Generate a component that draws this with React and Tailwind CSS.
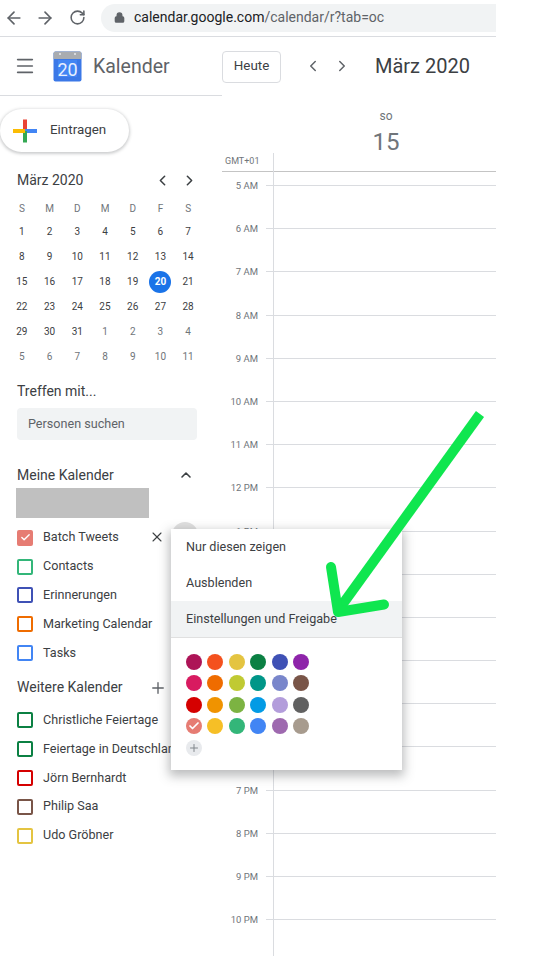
import React from "react";
import { ChevronLeft, ChevronRight, ChevronUp, X, Plus, ArrowLeft, ArrowRight, RotateCw, Lock, Menu, Check } from "lucide-react";

const weeks = [
  [1, 2, 3, 4, 5, 6, 7],
  [8, 9, 10, 11, 12, 13, 14],
  [15, 16, 17, 18, 19, 20, 21],
  [22, 23, 24, 25, 26, 27, 28],
  [29, 30, 31, 1, 2, 3, 4],
  [5, 6, 7, 8, 9, 10, 11],
];
const mine = [
  ["Batch Tweets", "#e67c73", true],
  ["Contacts", "#33b679"],
  ["Erinnerungen", "#3f51b5"],
  ["Marketing Calendar", "#ef6c00"],
  ["Tasks", "#4285f4"],
];
const other = [
  ["Christliche Feiertage", "#0b8043"],
  ["Feiertage in Deutschland", "#0b8043"],
  ["Jörn Bernhardt", "#d50000"],
  ["Philip Saa", "#795548"],
  ["Udo Gröbner", "#e4c441"],
];
const colors = [
  ["#ad1457", "#f4511e", "#e4c441", "#0b8043", "#3f51b5", "#8e24aa"],
  ["#d81b60", "#ef6c00", "#c0ca33", "#009688", "#7986cb", "#795548"],
  ["#d50000", "#f09300", "#7cb342", "#039be5", "#b39ddb", "#616161"],
  ["#e67c73", "#f6bf26", "#33b679", "#4285f4", "#9e69af", "#a79b8e"],
];
const hours = ["5 AM", "6 AM", "7 AM", "8 AM", "9 AM", "10 AM", "11 AM", "12 PM", "1 PM", "2 PM", "3 PM", "4 PM", "5 PM", "6 PM", "7 PM", "8 PM", "9 PM", "10 PM"];

function CalRow({ name, color, checked }) {
  return (
    <div className="flex h-[28.8px] items-center pl-[17px] whitespace-nowrap">
      <span
        className="flex h-[16px] w-[16px] shrink-0 items-center justify-center rounded-[2px] border-2"
        style={{ borderColor: color, backgroundColor: checked ? color : "transparent" }}
      >
        {checked && <Check size={11} strokeWidth={3} color="#fff" />}
      </span>
      <span className="ml-[10px] text-[12.6px] text-[#3c4043]">{name}</span>
    </div>
  );
}

function Sidebar() {
  return (
    <aside className="w-[222px] shrink-0">
      <div className="flex h-[59px] items-center border-b border-[#dadce0]">
        <Menu size={22} strokeWidth={1.8} color="#5f6368" className="ml-[14px]" />
        <svg width="30" height="31" viewBox="0 0 30 31" className="ml-[17px]">
          <rect x="0.5" y="0.5" width="28" height="30" rx="2" fill="#3b78e7" />
          <path d="M0.5 8V2.5a2 2 0 0 1 2-2h24a2 2 0 0 1 2 2V8z" fill="#a9acb0" />
          <circle cx="7" cy="3" r="1" fill="#e8eaed" />
          <circle cx="22" cy="3" r="1" fill="#e8eaed" />
          <rect x="5" y="9" width="19" height="17" fill="#4285f4" />
          <text x="14.5" y="25" textAnchor="middle" fontSize="18" fill="#e8f0fe" fontFamily="Roboto, sans-serif">20</text>
        </svg>
        <span className="ml-[10px] pt-[1px] text-[19.5px] text-[#5f6368]">Kalender</span>
      </div>

      <div className="mt-[13px] flex h-[43px] w-[129px] items-center rounded-[22px] bg-white pl-[13px] shadow-[0_1px_3px_1px_rgba(60,64,67,0.25)]">
        <svg width="24" height="24" viewBox="0 0 24 24">
          <rect x="10" y="0.5" width="4" height="11.5" fill="#ea4335" />
          <rect x="12" y="10" width="12" height="4" fill="#4285f4" />
          <rect x="10" y="12" width="4" height="11.5" fill="#34a853" />
          <rect x="0" y="10" width="12" height="4" fill="#fbbc04" />
        </svg>
        <span className="ml-[13px] text-[13.4px] text-[#3c4043]">Eintragen</span>
      </div>

      <div className="mt-[16px] flex h-[24px] items-center pl-[17px] pr-[24px]">
        <span className="flex-1 text-[14px] text-[#3c4043]">März 2020</span>
        <ChevronLeft size={17} strokeWidth={2.2} color="#3c4043" />
        <ChevronRight size={17} strokeWidth={2.2} color="#3c4043" className="ml-[10px]" />
      </div>

      <div className="ml-[8px] mt-[6px] grid w-[194px] grid-cols-7 text-center text-[10px]">
        {["S", "M", "D", "M", "D", "F", "S"].map((d, i) => (
          <span key={i} className="h-[21px] leading-[22px] text-[#70757a]">{d}</span>
        ))}
        {weeks.flat().map((d, i) => {
          const muted = i >= 31;
          const today = i === 19;
          return (
            <span key={i} className="flex h-[25px] items-center justify-center">
              <span
                className={
                  today
                    ? "flex h-[22px] w-[22px] items-center justify-center rounded-full bg-[#1a73e8] font-bold text-white"
                    : muted
                    ? "text-[#70757a]"
                    : "text-[#3c4043]"
                }
              >
                {d}
              </span>
            </span>
          );
        })}
      </div>

      <div className="mt-[12px] pl-[17px] text-[14px] leading-[20px] text-[#3c4043]">Treffen mit...</div>
      <div className="ml-[17px] mt-[7px] flex h-[32px] w-[180px] items-center rounded-[4px] bg-[#f1f3f4] pl-[11px] pt-[1px] text-[12.6px] text-[#5f6368]">
        Personen suchen
      </div>

      <div className="mt-[25px] flex h-[20px] items-center pl-[17px] pr-[28px]">
        <span className="flex-1 text-[14px] text-[#3c4043]">Meine Kalender</span>
        <ChevronUp size={16} strokeWidth={2.4} color="#3c4043" />
      </div>
      <div className="ml-[16px] mt-[3px] h-[30px] w-[133px] bg-[#c0c0c0]" />

      <div className="mt-[5.5px]">
        {mine.map(([n, c, ch]) => (
          <CalRow key={n} name={n} color={c} checked={ch} />
        ))}
      </div>

      <div className="mt-[10.5px] flex h-[20px] items-center pl-[17px]">
        <span className="w-[132px] text-[14px] text-[#3c4043]">Weitere Kalender</span>
        <Plus size={18} strokeWidth={1.8} color="#5f6368" />
      </div>

      <div className="mt-[8px]">
        {other.map(([n, c]) => (
          <CalRow key={n} name={n} color={c} />
        ))}
      </div>
    </aside>
  );
}

function Main() {
  return (
    <main className="min-w-0 flex-1">
      <div className="flex h-[60px] items-center">
        <span className="mb-[1px] flex h-[32px] w-[59px] items-center justify-center rounded-[4px] border border-[#dadce0] text-[13.4px] text-[#3c4043]">
          Heute
        </span>
        <ChevronLeft size={18} strokeWidth={2} color="#5f6368" className="mb-[2px] ml-[23px]" />
        <ChevronRight size={18} strokeWidth={2} color="#5f6368" className="mb-[2px] ml-[11px]" />
        <span className="mb-[2px] ml-[24px] text-[20px] text-[#3c4043]">März 2020</span>
      </div>
      <div className="h-[56px] pl-[54px] text-center">
        <div className="pt-[12px] text-[12px] leading-[14px] text-[#70757a]">so</div>
        <div className="mt-[4px] text-[24px] leading-[30px] text-[#70757a]">15</div>
      </div>
      <div className="flex">
        <div className="w-[51px] shrink-0">
          <div className="h-[19px] border-b border-[#c4c4c4] pl-[3px] text-[9px] leading-[16px] text-[#70757a]">GMT+01</div>
          <div className="h-[7px]" />
          {hours.map((h) => (
            <div key={h} className="flex h-[43.2px] items-start justify-end text-[9.5px] leading-[12px] text-[#70757a]">
              <span className="pt-[1px]">{h}</span>
              <span className="ml-[8px] mt-[6px] h-px w-[7px] bg-[#dadce0]" />
            </div>
          ))}
        </div>
        <div className="flex-1 border-l border-[#dadce0]">
          <div className="h-[19px] border-b border-[#c4c4c4]" />
          <div className="h-[14px] border-b border-[#dadce0]" />
          {hours.map((h) => (
            <div key={h} className="h-[43.2px] border-b border-[#dadce0]" />
          ))}
        </div>
      </div>
    </main>
  );
}

export default function App() {
  return (
    <div className="relative h-[956px] w-[533px] overflow-hidden bg-white font-['Roboto',sans-serif]">
      <div className="w-[496px]">
        <div className="flex h-[37px] items-center border-b border-[#dadce0] pb-[1px]">
          <ArrowLeft size={20} strokeWidth={2} color="#5f6368" className="ml-[4px]" />
          <ArrowRight size={20} strokeWidth={2} color="#5f6368" className="ml-[11px]" />
          <RotateCw size={17} strokeWidth={2.2} color="#5f6368" className="ml-[14px]" />
          <div className="ml-[15px] flex h-[28px] flex-1 items-center rounded-l-[14px] bg-[#f1f3f4] pl-[13px]">
            <Lock size={11} strokeWidth={3} color="#5f6368" fill="#5f6368" />
            <span className="ml-[9px] text-[14px]">
              <span className="text-[#202124]">calendar.google.com</span>
              <span className="text-[#5f6368]">/calendar/r?tab=oc</span>
            </span>
          </div>
        </div>
        <div className="flex">
          <Sidebar />
          <Main />
        </div>
      </div>

      <X size={16} strokeWidth={1.6} color="#3c4043" className="absolute left-[149px] top-[529px]" />
      <div className="absolute left-[172px] top-[522px] h-[26px] w-[26px] rounded-full bg-[#e0e0e0]" />

      <div className="absolute left-[171px] top-[529px] h-[241px] w-[231px] bg-white text-[12.6px] text-[#3c4043] shadow-[0_4px_10px_2px_rgba(60,64,67,0.35)]">
        <div className="flex h-[36px] items-center pl-[15px]">Nur diesen zeigen</div>
        <div className="flex h-[36px] items-center pl-[15px]">Ausblenden</div>
        <div className="flex h-[37px] items-center border-b border-[#e0e0e0] bg-[#f1f3f4] pl-[15px]">Einstellungen und Freigabe</div>
        <div className="pl-[15px] pt-[16px]">
          {colors.map((row, i) => (
            <div key={i} className="flex h-[21.4px] gap-[5.4px]">
              {row.map((c) => (
                <span key={c} className="flex h-[16px] w-[16px] items-center justify-center rounded-full" style={{ backgroundColor: c }}>
                  {c === "#e67c73" && <Check size={12} strokeWidth={3.5} color="#fff" />}
                </span>
              ))}
            </div>
          ))}
          <span className="flex h-[16px] w-[16px] items-center justify-center rounded-full bg-[#e8eaed]">
            <Plus size={12} strokeWidth={2} color="#80868b" />
          </span>
        </div>
      </div>

      <svg className="pointer-events-none absolute left-0 top-0" width="533" height="956" viewBox="0 0 533 956">
        <path d="M480 414 L337 612" stroke="#0fe64f" strokeWidth="10" fill="none" />
        <path d="M331 567 L338 612 L384 604.5" stroke="#0fe64f" strokeWidth="10" strokeLinecap="round" strokeLinejoin="round" fill="none" />
      </svg>
    </div>
  );
}
